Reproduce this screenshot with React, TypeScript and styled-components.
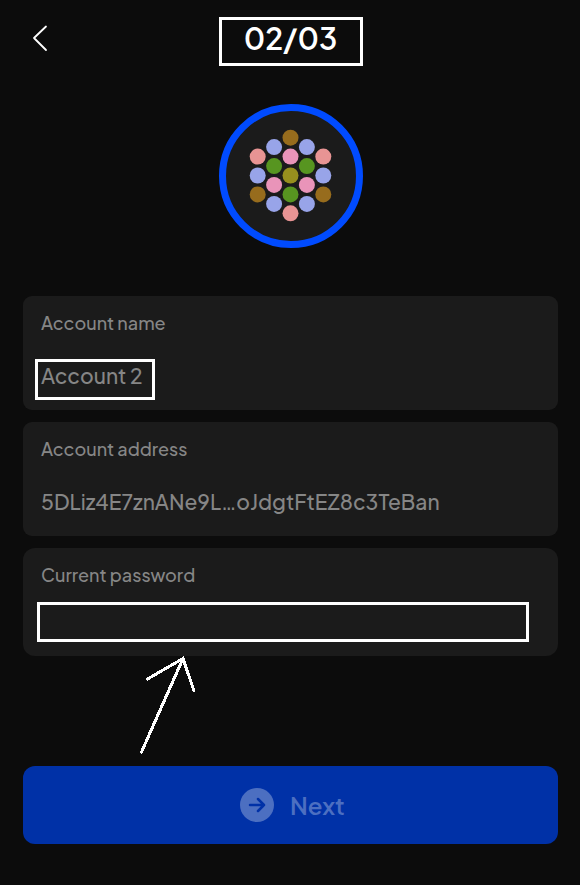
import React from "react";
import styled, { createGlobalStyle } from "styled-components";

const GlobalStyle = createGlobalStyle`
  *, *::before, *::after { box-sizing: border-box; }
  html, body { margin: 0; padding: 0; background: #0c0c0c; }
  body { font-family: "Plus Jakarta Sans", Inter, "Liberation Sans", sans-serif; }
`;

const Screen = styled.main`
  position: relative;
  width: 580px;
  height: 885px;
  padding: 17px 22px 0 23px;
  background: #0c0c0c;
  overflow: hidden;
`;

const Header = styled.header`
  display: grid;
  grid-template-columns: 1fr 144px 1fr;
  align-items: start;
  height: 49px;
`;

const BackButton = styled.button`
  width: 34px;
  height: 42px;
  padding: 0;
  border: 0;
  background: none;
  display: flex;
  align-items: center;
  justify-content: center;
`;

const StepBox = styled.h1`
  grid-column: 2;
  height: 49px;
  margin: 0;
  border: 3px solid #fff;
  display: flex;
  justify-content: center;
  color: #fff;
  font-size: 30px;
  font-weight: 600;
  line-height: 37px;
`;

const Avatar = styled.div`
  width: 144px;
  height: 144px;
  margin: 38px auto 0;
  border: 7px solid #004bff;
  border-radius: 50%;
  background: #1b1b1b;
`;

const Fields = styled.section`
  display: flex;
  flex-direction: column;
  gap: 12px;
  margin-top: 48px;
`;

const Card = styled.div<{ $height: number; $radius: number }>`
  height: ${(p) => p.$height}px;
  padding: 15px 18px 0;
  border-radius: ${(p) => p.$radius}px;
  background: #1b1b1b;
  color: #868686;
`;

const Label = styled.label`
  display: block;
  height: 24px;
  font-size: 18px;
  font-weight: 500;
  line-height: 24px;
  white-space: nowrap;
`;

const Value = styled.div`
  margin-top: 26px;
  height: 30px;
  font-size: 21px;
  font-weight: 500;
  line-height: 30px;
  white-space: nowrap;
`;

const OutlinedValue = styled(Value)`
  width: 120px;
  height: 41px;
  margin: 24px 0 0 -6px;
  padding-left: 3px;
  border: 3px solid #fff;
  line-height: 28px;
`;

const PasswordInput = styled.input`
  display: block;
  width: 492px;
  height: 40px;
  margin: 15px 0 0 -4px;
  padding: 0 8px;
  border: 3px solid #fff;
  border-radius: 0;
  outline: none;
  background: transparent;
  color: #868686;
  font: inherit;
  font-size: 21px;
`;

const NextButton = styled.button`
  display: flex;
  align-items: center;
  justify-content: center;
  gap: 16px;
  width: 100%;
  height: 78px;
  margin-top: 110px;
  padding: 0 0 0 5px;
  border: 0;
  border-radius: 12px;
  background: #0031a7;
  color: #4c6fc1;
  font-family: inherit;
  font-size: 24px;
  font-weight: 600;
  line-height: 30px;
`;

const NextText = styled.span`
  width: 56px;
  text-align: left;
  white-space: nowrap;
`;

const Pointer = styled.svg`
  position: absolute;
  left: 136px;
  top: 650px;
  pointer-events: none;
`;

const BROWN = "#976c1d";
const BLUE = "#98a4e9";
const CORAL = "#e89494";
const PINK = "#e994b9";
const GREEN = "#579520";
const OLIVE = "#978f1e";

/* Column and half-row offsets from the centre of the identicon. */
const dots: [number, number, string][] = [
  [0, -4, BROWN],
  [-1, -3, BLUE],
  [1, -3, BLUE],
  [-2, -2, CORAL],
  [0, -2, PINK],
  [2, -2, CORAL],
  [-1, -1, GREEN],
  [1, -1, GREEN],
  [-2, 0, BLUE],
  [0, 0, OLIVE],
  [2, 0, BLUE],
  [-1, 1, PINK],
  [1, 1, PINK],
  [-2, 2, BROWN],
  [0, 2, GREEN],
  [2, 2, BROWN],
  [-1, 3, BLUE],
  [1, 3, BLUE],
  [0, 4, CORAL],
];

function Identicon() {
  return (
    <Avatar>
      <svg width="130" height="130" viewBox="0 0 130 130" display="block">
        {dots.map(([x, y, fill]) => (
          <circle key={`${x},${y}`} cx={64.5 + x * 16.4} cy={64.5 + y * 9.46} r="8" fill={fill} />
        ))}
      </svg>
    </Avatar>
  );
}

export default function App() {
  return (
    <>
      <GlobalStyle />
      <Screen>
        <Header>
          <BackButton aria-label="Back">
            <svg width="18" height="28" viewBox="0 0 18 28" fill="none" stroke="#fff" strokeWidth="1.8" strokeLinecap="round" strokeLinejoin="round">
              <path d="M15 2.5 3 14 15 26" />
            </svg>
          </BackButton>
          <StepBox>02/03</StepBox>
        </Header>
        <Identicon />
        <Fields>
          <Card $height={114} $radius={9}>
            <Label>Account name</Label>
            <OutlinedValue>Account 2</OutlinedValue>
          </Card>
          <Card $height={114} $radius={9}>
            <Label>Account address</Label>
            <Value>5DLiz4E7znANe9L…oJdgtFtEZ8c3TeBan</Value>
          </Card>
          <Card $height={108} $radius={12}>
            <Label htmlFor="password">Current password</Label>
            <PasswordInput id="password" type="password" />
          </Card>
        </Fields>
        <NextButton>
          <svg width="34" height="34" viewBox="0 0 34 34" fill="none">
            <circle cx="17" cy="17" r="17" fill="#4c6fc1" />
            <path d="M10 17h14M18 11l6 6-6 6" stroke="#0031a7" strokeWidth="2.5" strokeLinecap="round" strokeLinejoin="round" />
          </svg>
          <NextText>Next</NextText>
        </NextButton>
        <Pointer width="64" height="108" viewBox="0 0 64 108" fill="none" stroke="#fff" strokeWidth="3" strokeLinecap="round" shapeRendering="crispEdges">
          <path d="M5.5 102 47 8.5M11.5 29 47 8.5 58 41" />
        </Pointer>
      </Screen>
    </>
  );
}
